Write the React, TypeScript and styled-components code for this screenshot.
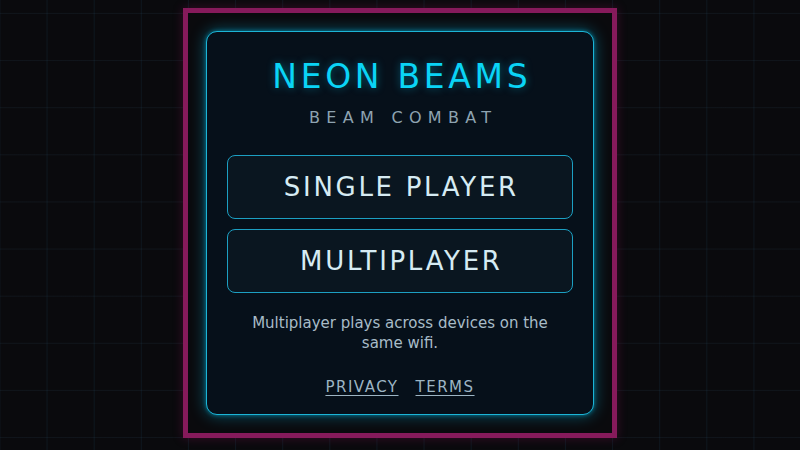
import React from 'react';
import styled, { createGlobalStyle } from 'styled-components';

const GlobalStyle = createGlobalStyle`
	html, body {
		margin: 0;
		padding: 0;
		height: 100%;
		background: #0a0a0d;
	}

	#root {
		height: 100%;
	}
`;

const Page = styled.div`
	box-sizing: border-box;
	height: 450px;
	padding-bottom: 5px;
	display: flex;
	align-items: center;
	justify-content: center;
	font-family: 'DejaVu Sans', 'Liberation Sans', sans-serif;
	background-color: #0a0a0d;
	background-image:
		linear-gradient(to right, rgba(40, 110, 150, 0.13) 1px, transparent 1px),
		linear-gradient(to bottom, rgba(60, 100, 130, 0.12) 1px, transparent 1px);
	background-size: 47.14px 47.14px;
	background-position: center center;
`;

const Frame = styled.div`
	border: 5px solid #861a5b;
	padding: 18px;
	background: #0a0a0d;
	box-shadow: 0 0 10px rgba(160, 20, 100, 0.3);
`;

const Card = styled.div`
	box-sizing: border-box;
	width: 388px;
	height: 384px;
	padding: 25px 20px 0;
	border: 1.5px solid #1cb4d6;
	border-radius: 11px;
	background: #06101a;
	box-shadow: 0 0 16px rgba(0, 190, 235, 0.45), 0 0 4px rgba(0, 200, 240, 0.5);
	display: flex;
	flex-direction: column;
	align-items: center;
`;

const Title = styled.h1`
	margin: 0;
	font-size: 33px;
	line-height: 40px;
	font-weight: 400;
	letter-spacing: 3.7px;
	padding-left: 3.7px;
	color: #0ad4f6;
	text-shadow: 0 0 8px rgba(0, 210, 255, 0.4);
`;

const Subtitle = styled.div`
	margin-top: 11px;
	font-size: 16px;
	line-height: 20px;
	font-weight: 400;
	letter-spacing: 6.3px;
	padding-left: 6.3px;
	color: #8ea3b1;
`;

const ButtonList = styled.div`
	margin-top: 27px;
	width: 100%;
	display: flex;
	flex-direction: column;
	gap: 10px;
`;

const MenuButton = styled.button`
	box-sizing: border-box;
	width: 100%;
	height: 64px;
	display: flex;
	align-items: center;
	justify-content: center;
	border: 1.5px solid #1c9fc2;
	border-radius: 8px;
	background: #0a1620;
	color: #d6ebf3;
	font-family: inherit;
	font-size: 26px;
	font-weight: 400;
	letter-spacing: 2.7px;
	padding: 0 0 0 2.7px;
	cursor: pointer;
`;

const Note = styled.p`
	margin: 20px 0 0;
	max-width: 320px;
	font-size: 15px;
	line-height: 20px;
	font-weight: 400;
	text-align: center;
	color: #a8bcc8;
`;

const Links = styled.div`
	margin-top: 24px;
	display: flex;
	gap: 17px;
`;

const FooterLink = styled.a`
	font-size: 15px;
	line-height: 20px;
	font-weight: 400;
	letter-spacing: 1.5px;
	color: #9db5c4;
	text-decoration: underline;
	text-underline-offset: 3px;
	cursor: pointer;
`;

const App = () => {
	return (
		<>
			<GlobalStyle />
			<Page>
				<Frame>
					<Card>
						<Title>NEON BEAMS</Title>
						<Subtitle>BEAM COMBAT</Subtitle>
						<ButtonList>
							<MenuButton>SINGLE PLAYER</MenuButton>
							<MenuButton>MULTIPLAYER</MenuButton>
						</ButtonList>
						<Note>Multiplayer plays across devices on the same wifi.</Note>
						<Links>
							<FooterLink>PRIVACY</FooterLink>
							<FooterLink>TERMS</FooterLink>
						</Links>
					</Card>
				</Frame>
			</Page>
		</>
	);
};

export default App;
